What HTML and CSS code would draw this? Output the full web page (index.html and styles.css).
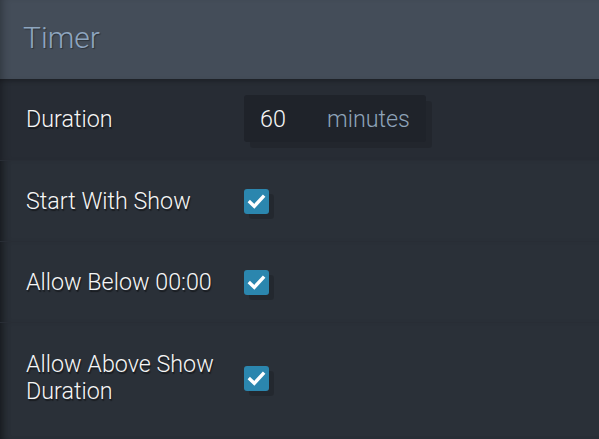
FILE: index.html
```html
<!DOCTYPE html>
<html>
<head>
<meta charset="utf-8">
<link rel="stylesheet" href="styles.css">
</head>
<body>
<div class="panel">
  <div class="header"><h1 class="title">Timer</h1></div>
  <div class="row row-first">
    <div class="label">Duration</div>
    <div class="input"><span class="value">60</span><span class="unit">minutes</span></div>
  </div>
  <div class="row">
    <div class="label">Start With Show</div>
    <div class="check"><svg viewBox="0 0 25 25" width="25" height="25"><path d="M6 13.2 L10.3 17.3 L19 7.8" fill="none" stroke="#fff" stroke-width="3.4" stroke-linecap="square"/></svg></div>
  </div>
  <div class="row">
    <div class="label">Allow Below 00:00</div>
    <div class="check"><svg viewBox="0 0 25 25" width="25" height="25"><path d="M6 13.2 L10.3 17.3 L19 7.8" fill="none" stroke="#fff" stroke-width="3.4" stroke-linecap="square"/></svg></div>
  </div>
  <div class="row row-last">
    <div class="label">Allow Above Show<br>Duration</div>
    <div class="check"><svg viewBox="0 0 25 25" width="25" height="25"><path d="M6 13.2 L10.3 17.3 L19 7.8" fill="none" stroke="#fff" stroke-width="3.4" stroke-linecap="square"/></svg></div>
  </div>
</div>
</body>
</html>
```
FILE: styles.css
```css
html, body {
  margin: 0;
  padding: 0;
  background: #2a3038;
}
.panel {
  width: 599px;
  height: 439px;
  overflow: hidden;
  font-family: Roboto, "Liberation Sans", sans-serif;
  background: #2a3038;
  box-shadow: inset 8px 0 8px -6px rgba(0,0,0,0.3);
}
.header {
  height: 79px;
  background: #444d59;
  display: flex;
  align-items: center;
  padding-left: 23px;
  box-shadow: inset 8px 0 8px -6px rgba(0,0,0,0.3);
}
.title {
  margin: 0;
  font-size: 30px;
  font-weight: 300;
  color: #8ea5bf;
  text-shadow: 1px 1px 1px rgba(0,0,0,0.35);
  position: relative;
  top: -2px;
}
.row {
  height: 81px;
  display: flex;
  align-items: center;
  padding-left: 26px;
  box-sizing: border-box;
  border-top: 1px solid #282d35;
  box-shadow: inset 8px 0 8px -6px rgba(0,0,0,0.3);
}
.row-first {
  background: #272c34;
  border-top: none;
  box-shadow: inset 0 5px 5px -3px rgba(0,0,0,0.25), inset 8px 0 8px -6px rgba(0,0,0,0.3);
}
.row-last {
  height: 117px;
  align-items: flex-start;
  padding-top: 28px;
}
.label {
  width: 218px;
  font-size: 23.3px;
  font-weight: 300;
  line-height: 27px;
  color: #f6f6f6;
  text-shadow: 1px 2px 1px rgba(0,0,0,0.45);
}
.row-last .check { margin-top: 15px; }
.input {
  width: 182px;
  height: 47px;
  box-sizing: border-box;
  background: #1f232a;
  border-radius: 3px;
  display: flex;
  align-items: center;
  padding-left: 16px;
  font-size: 23.3px;
  font-weight: 300;
  box-shadow: 6px 6px 0 rgba(0,0,0,0.12);
  position: relative;
  top: -1px;
}
.value {
  color: #f6f6f6;
  width: 67px;
}
.unit {
  color: #8ea3b9;
}
.check {
  width: 25px;
  height: 25px;
  background: #2b86ae;
  border-radius: 3px;
  box-shadow: 5px 5px 0 rgba(0,0,0,0.15);
  display: flex;
}
.check svg { display: block; }
```
